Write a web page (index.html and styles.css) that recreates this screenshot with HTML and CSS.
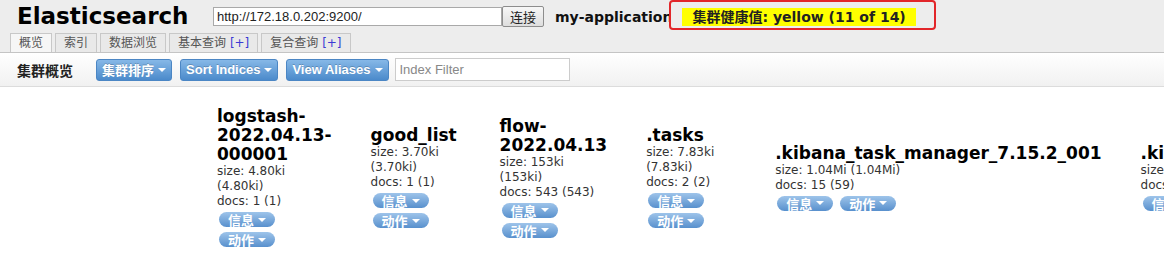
FILE: index.html
```html
<!DOCTYPE html>
<html lang="zh-CN">
<head>
    <meta charset="UTF-8">
    <title>elasticsearch-head</title>
    <link rel="stylesheet" href="styles.css">
</head>
<body>
    <div class="header">
        <div class="topbar">
            <h1 class="logo">Elasticsearch</h1>
            <input class="url" type="text" value="http://172.18.0.202:9200/">
            <button class="connect">连接</button>
            <span class="cluster-name">my-application</span>
            <div class="health-box">
                <span class="health">集群健康值: yellow (11 of 14)</span>
            </div>
        </div>
        <div class="tabs">
            <span class="tab active">概览</span>
            <span class="tab">索引</span>
            <span class="tab">数据浏览</span>
            <span class="tab">基本查询 <span class="plus">[+]</span></span>
            <span class="tab">复合查询 <span class="plus">[+]</span></span>
        </div>
    </div>
    <div class="toolbar">
        <span class="toolbar-title">集群概览</span>
        <button class="menu-btn">集群排序 <i class="caret"></i></button>
        <button class="menu-btn">Sort Indices <i class="caret"></i></button>
        <button class="menu-btn">View Aliases <i class="caret"></i></button>
        <input class="filter" type="text" placeholder="Index Filter">
    </div>
    <div class="overview">
        <div class="index">
            <h3>logstash-<wbr>2022.04.13-<wbr>000001</h3>
            <p>size: 4.80ki (4.80ki)</p>
            <p>docs: 1 (1)</p>
            <div class="actions">
                <span class="pill">信息 <i class="caret"></i></span>
                <span class="pill">动作 <i class="caret"></i></span>
            </div>
        </div>
        <div class="index">
            <h3>good_list</h3>
            <p>size: 3.70ki (3.70ki)</p>
            <p>docs: 1 (1)</p>
            <div class="actions">
                <span class="pill">信息 <i class="caret"></i></span>
                <span class="pill">动作 <i class="caret"></i></span>
            </div>
        </div>
        <div class="index">
            <h3>flow-<wbr>2022.04.13</h3>
            <p>size: 153ki (153ki)</p>
            <p>docs: 543 (543)</p>
            <div class="actions">
                <span class="pill">信息 <i class="caret"></i></span>
                <span class="pill">动作 <i class="caret"></i></span>
            </div>
        </div>
        <div class="index">
            <h3>.tasks</h3>
            <p>size: 7.83ki (7.83ki)</p>
            <p>docs: 2 (2)</p>
            <div class="actions">
                <span class="pill">信息 <i class="caret"></i></span>
                <span class="pill">动作 <i class="caret"></i></span>
            </div>
        </div>
        <div class="index">
            <h3>.kibana_task_manager_7.15.2_001</h3>
            <p>size: 1.04Mi (1.04Mi)</p>
            <p>docs: 15 (59)</p>
            <div class="actions">
                <span class="pill">信息 <i class="caret"></i></span>
                <span class="pill">动作 <i class="caret"></i></span>
            </div>
        </div>
        <div class="index">
            <h3>.kibana_7.15.2_001</h3>
            <p>size: 2.31Mi (2.31Mi)</p>
            <p>docs: 668 (668)</p>
            <div class="actions">
                <span class="pill">信息 <i class="caret"></i></span>
                <span class="pill">动作 <i class="caret"></i></span>
            </div>
        </div>
    </div>
</body>
</html>
```

FILE: styles.css
```css
* {
    margin: 0;
    padding: 0;
    box-sizing: border-box;
}
html, body {
    overflow: hidden;
}
body {
    font-family: "DejaVu Sans", "Noto Sans CJK SC", sans-serif;
    background-color: #fff;
    color: #222;
    height: 263px;
}
.header {
    background-color: #ededed;
}
.topbar {
    display: flex;
    align-items: center;
    height: 33px;
    padding-left: 17px;
}
.logo {
    width: 196px;
    font-size: 23px;
    font-weight: bold;
    line-height: 33px;
    color: #000;
}
.url {
    width: 289px;
    height: 19px;
    padding: 0 3px;
    border: 1px solid #a9a9a9;
    background: #fff;
    color: #222;
    font: 13px "Liberation Sans", sans-serif;
}
.connect {
    width: 42px;
    height: 21px;
    border: 1px solid #8d8d8d;
    border-radius: 2px;
    background: linear-gradient(#f7f7f7, #dedede);
    color: #222;
    font: 13px "Noto Sans CJK SC", sans-serif;
}
.cluster-name {
    margin-left: 11px;
    font-size: 14px;
    font-weight: bold;
    color: #111;
    white-space: nowrap;
}
.health-box {
    position: relative;
    align-self: flex-start;
    width: 267px;
    height: 30px;
    margin-left: -3px;
    padding: 5px 0 0 11px;
    border: 2px solid #e2262a;
    border-radius: 4px;
    background-color: #ededed;
}
.health {
    display: inline-block;
    height: 18px;
    padding: 0 10px;
    background-color: #ffff00;
    font-size: 14px;
    font-weight: bold;
    line-height: 18px;
    color: #222;
    white-space: nowrap;
}
.tabs {
    display: flex;
    gap: 3px;
    height: 19px;
    padding-left: 10px;
}
.tab {
    height: 19px;
    padding: 0 8px;
    border: 1px solid #c8c8c8;
    border-bottom: none;
    background-color: #e9e9e9;
    color: #555;
    font-size: 12px;
    line-height: 18px;
    white-space: nowrap;
}
.tab.active {
    background-color: #f6f6f6;
}
.tab .plus {
    color: #3b3bd4;
}
.toolbar {
    display: flex;
    align-items: center;
    gap: 8px;
    height: 35px;
    padding-left: 17px;
    border-top: 1px solid #c4c4c4;
    border-bottom: 1px solid #dcdcdc;
    background: linear-gradient(#fff, #f1f1f1);
}
.toolbar-title {
    width: 71px;
    font-size: 14px;
    font-weight: bold;
    color: #222;
}
.menu-btn {
    display: flex;
    align-items: center;
    gap: 4px;
    height: 22px;
    padding: 0 5px;
    border: 1px solid #4b86c4;
    border-radius: 3px;
    background: linear-gradient(#86b8e7, #4b8acb);
    color: #fff;
    font: bold 13px "Liberation Sans", "Noto Sans CJK SC", sans-serif;
    text-shadow: 0 -1px 0 rgba(0, 0, 0, 0.2);
}
.caret {
    display: inline-block;
    width: 0;
    height: 0;
    border-left: 4px solid transparent;
    border-right: 4px solid transparent;
    border-top: 4px solid #fff;
}
.filter {
    width: 175px;
    height: 23px;
    margin-left: -2px;
    padding: 0 4px;
    border: 1px solid #ccc;
    font: 13px "Liberation Sans", sans-serif;
    color: #222;
}
.filter::placeholder {
    color: #888;
}
.overview {
    display: flex;
    align-items: center;
    gap: 39px;
    padding: 20px 0 0 217px;
}
.index {
    flex: none;
    width: min-content;
    min-width: 90px;
}
.index h3 {
    font-size: 17px;
    line-height: 19px;
    font-weight: bold;
    color: #000;
}
.index p {
    font-size: 12px;
    line-height: 15px;
    color: #333;
}
.actions {
    display: flex;
    flex-wrap: wrap;
    gap: 5px 7px;
    margin: 3px 0 0 2px;
}
.pill {
    display: flex;
    align-items: center;
    gap: 4px;
    height: 15px;
    padding: 0 9px;
    border-radius: 8px;
    background: linear-gradient(#9ec4ea, #5890cd);
    color: #fff;
    font: bold 13px/15px "Noto Sans CJK SC", sans-serif;
    white-space: nowrap;
}
```
